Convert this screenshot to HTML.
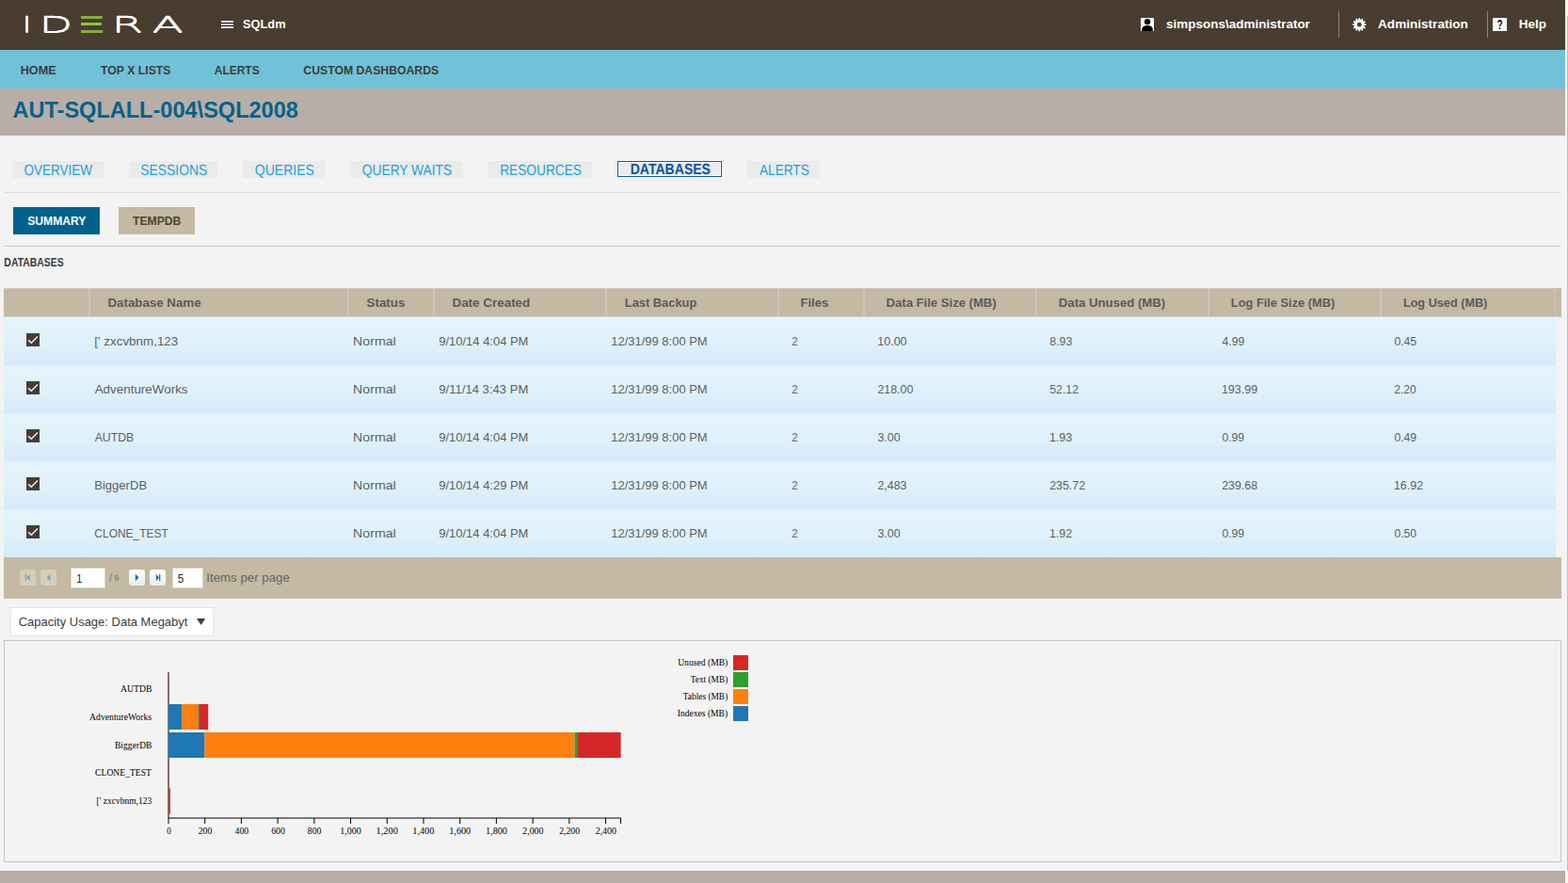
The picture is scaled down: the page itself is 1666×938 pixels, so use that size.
<!DOCTYPE html>
<html lang="en">
<head>
<meta charset="utf-8">
<title>SQLdm - AUT-SQLALL-004\SQL2008 - Databases</title>
<style>
*{box-sizing:border-box;margin:0;padding:0}
html,body{width:1666px;height:938px;overflow:hidden;background:#f3f3f3}
body{position:relative;font-family:"Liberation Sans",sans-serif;font-size:14px;color:#555}
a{text-decoration:none}
.t{position:absolute;display:block;white-space:pre;line-height:1;font-weight:400;transform-origin:0 0}
.lg{font-family:"DejaVu Sans Light","DejaVu Sans",sans-serif}
.s{font-family:"Liberation Serif",serif}
.bar,.sep,.ico,.tab,.hr,.btn,.thead,.row,.paging,.dd,.chart,.sb,svg,i,b{position:absolute;display:block}
.hd{left:0;top:0;width:1663px;height:53px;background:#483d30}
.nv{left:0;top:53px;width:1663px;height:41px;background:#6fc2d7}
.tb{left:0;top:94px;width:1663px;height:50px;background:#b8aea7}
.ft{left:0;top:925px;width:1663px;height:13px;background:#b8aea7}
.sep{top:12px;width:1px;height:28px;background:#8b8782}
.ico{left:1586px;top:19px;width:15px;height:14px;background:#fff}
.tab{top:171px;height:18px;background:#ebebeb}
.tab.sel{height:17px;border:1px solid #0b58a8;box-shadow:inset 0 0 0 1px #fff,0 0 0 1px #fafafa}
.hr{left:4px;height:1px;width:1655px}
.btn{top:220px;height:29px}
.thead{left:4px;top:306px;width:1655px;height:31px;background:#c4b9a2;border-top:1px solid #d1c3c0;border-bottom:1px solid #d2d6d0}
.thead i{top:0;width:2px;height:29px;background:#d1c3c1}
.thead b{left:1649px;top:-1px;width:6px;height:1px;background:#c4b9a2}
.row{left:4px;width:1649px;height:51px;background:linear-gradient(#e5f4fc,#e0f1fb 50%,#d3ebf8)}
.cb{left:24px;top:17px;width:14px;height:14px;background:#483d30}
.paging{left:4px;top:592px;width:1655px;height:44px;background:#c4b9a2}
.pb{top:13.2px;width:16.4px;height:16.5px;border-radius:3px}
.pb.dis{background:#d5cdbc}
.pb.en{background:linear-gradient(#fdfdfd,#ececec)}
.inp{top:11px;height:22px;background:#fff;border:1px solid #ddd7ca}
.dd{left:11px;top:645px;width:216px;height:31px;background:#fff;border:1px solid #e4e4e4}
.chart{left:4px;top:680px;width:1655px;height:236px;border:1px solid #c6c6c6;background:#f3f3f3}
.sb{left:1663px;top:0;width:3px;height:938px;background:#f4f4f4}
.sb i{left:2px;top:17px;width:1px;height:908px;background:#c1c1c1}
</style>
</head>
<body>
<header>
<div class="bar hd"></div>
<div class="logo" aria-label="IDERA"><span class="t lg" style="left:23px;top:15px;font-size:23.4px;font-weight:200;color:#fff;transform:translateX(0.62px) scaleX(1.4622);-webkit-text-stroke:.3px #fff;text-shadow:0 .5px 0 #fff,0 -.5px 0 #fff;">I</span><span class="t lg" style="left:41px;top:15px;font-size:23.4px;font-weight:200;color:#fff;transform:translateX(0.64px) scaleX(1.9561);-webkit-text-stroke:.3px #fff;text-shadow:0 .5px 0 #fff,0 -.5px 0 #fff;">D</span><span class="t lg" style="left:74px;top:16px;font-size:22px;font-weight:200;color:#8dc63f;transform:translateX(0.15px) scaleX(2.9340);clip-path:inset(-2px 0 -2px 4.04px);text-shadow:0 1px 0 #8dc63f,0 -1px 0 #8dc63f;">E</span><span class="t lg" style="left:118px;top:15px;font-size:23.4px;font-weight:200;color:#fff;transform:translateX(0.39px) scaleX(2.0703);-webkit-text-stroke:.3px #fff;text-shadow:0 .5px 0 #fff,0 -.5px 0 #fff;">R</span><span class="t lg" style="left:161px;top:15px;font-size:23.4px;font-weight:200;color:#fff;transform:translateX(0.83px) scaleX(2.0636);-webkit-text-stroke:.3px #fff;text-shadow:0 .5px 0 #fff,0 -.5px 0 #fff;">A</span></div>
<svg style="left:235px;top:22px" width="13" height="8" viewBox="0 0 13 8"><path d="M0 0h13v8H0z" fill="#000"/><path d="M0 0h13v2H0zM0 3h13v2H0zM0 6h13v2H0z" fill="#fff"/></svg><span class="t" style="left:257px;top:19px;font-size:13.4px;font-weight:700;color:#fff;transform:translateX(1.00px) scaleX(0.9563);">SQLdm</span>
<svg style="left:1212px;top:19px" width="14" height="14" viewBox="0 0 14 14"><rect width="14" height="14" fill="#fff"/><circle cx="7.1" cy="4.1" r="3.2" fill="#000"/><path d="M1.2 14v-1.6C1.2 9.8 3.6 8 7.1 8s5.7 1.8 5.7 4.4V14z" fill="#000"/></svg><span class="t" style="left:1239px;top:19px;font-size:13.4px;font-weight:700;color:#fff;transform:translateX(0.10px) scaleX(1.0063);">simpsons\administrator</span>
<b class="sep" style="left:1422px"></b><svg style="left:1437px;top:18.8px" width="15" height="15" viewBox="0 0 15 15"><path d="M14.46 6.41L14.46 7.99L12.73 8.06L12.43 9.17L13.89 10.09L13.10 11.46L11.57 10.66L10.76 11.47L11.56 13.00L10.19 13.79L9.27 12.33L8.16 12.63L8.09 14.36L6.51 14.36L6.44 12.63L5.33 12.33L4.41 13.79L3.04 13.00L3.84 11.47L3.03 10.66L1.50 11.46L0.71 10.09L2.17 9.17L1.87 8.06L0.14 7.99L0.14 6.41L1.87 6.34L2.17 5.23L0.71 4.31L1.50 2.94L3.03 3.74L3.84 2.93L3.04 1.40L4.41 0.61L5.33 2.07L6.44 1.77L6.51 0.04L8.09 0.04L8.16 1.77L9.27 2.07L10.19 0.61L11.56 1.40L10.76 2.93L11.57 3.74L13.10 2.94L13.89 4.31L12.43 5.23L12.73 6.34Z" fill="#fff"/><circle cx="7.3" cy="7.2" r="2.4" fill="#483d30"/></svg><span class="t" style="left:1464px;top:19px;font-size:13.4px;font-weight:700;color:#fff;transform:translateX(0.07px) scaleX(1.0134);">Administration</span>
<b class="sep" style="left:1580px"></b><i class="ico"></i><span class="t" style="left:1590px;top:19px;font-size:14px;font-weight:700;color:#000;transform:translateX(0.74px) scaleX(0.6737);">?</span><span class="t" style="left:1613px;top:19px;font-size:13.4px;font-weight:700;color:#fff;transform:translateX(0.82px) scaleX(1.0064);">Help</span>
</header>
<nav>
<div class="bar nv"></div>
<a class="t" style="left:21px;top:68px;font-size:13.4px;font-weight:700;color:#3d3d3d;transform:translateX(0.71px) scaleX(0.9445);">HOME</a>
<a class="t" style="left:107px;top:68px;font-size:13.4px;font-weight:700;color:#3d3d3d;transform:translateX(0.05px) scaleX(0.9148);">TOP X LISTS</a>
<a class="t" style="left:227px;top:68px;font-size:13.4px;font-weight:700;color:#3d3d3d;transform:translateX(0.74px) scaleX(0.8938);">ALERTS</a>
<a class="t" style="left:322px;top:68px;font-size:13.4px;font-weight:700;color:#3d3d3d;transform:translateX(0.31px) scaleX(0.9134);">CUSTOM DASHBOARDS</a>
</nav>
<main>
<div class="bar tb"></div>
<h1 class="t" style="left:13px;top:105px;font-size:24.4px;font-weight:700;color:#00628c;transform:translateX(0.48px) scaleX(0.9648);">AUT-SQLALL-004\SQL2008</h1>
<nav>
<div class="tab" style="left:13px;width:97px"></div><a class="t" style="left:25px;top:173px;font-size:16px;color:#1ea0db;transform:translateX(0.47px) matrix(0.8449,0,.0005,1,0,0);">OVERVIEW</a>
<div class="tab" style="left:137px;width:94px"></div><a class="t" style="left:149px;top:173px;font-size:16px;color:#1ea0db;transform:translateX(0.28px) matrix(0.8674,0,.0005,1,0,0);">SESSIONS</a>
<div class="tab" style="left:258px;width:87px"></div><a class="t" style="left:270px;top:173px;font-size:16px;color:#1ea0db;transform:translateX(0.82px) matrix(0.8757,0,.0005,1,0,0);">QUERIES</a>
<div class="tab" style="left:372px;width:120px"></div><a class="t" style="left:384px;top:173px;font-size:16px;color:#1ea0db;transform:translateX(0.82px) matrix(0.8604,0,.0005,1,0,0);">QUERY WAITS</a>
<div class="tab" style="left:519px;width:110px"></div><a class="t" style="left:531px;top:173px;font-size:16px;color:#1ea0db;transform:translateX(0.12px) matrix(0.8571,0,.0005,1,0,0);">RESOURCES</a>
<div class="tab sel" style="left:656px;width:111px"></div><a class="t" style="left:669px;top:172px;font-size:16px;font-weight:700;color:#0054a6;transform:translateX(0.71px) matrix(0.8773,0,.0005,1,0,0);">DATABASES</a>
<div class="tab" style="left:794px;width:77px"></div><a class="t" style="left:806px;top:173px;font-size:16px;color:#1ea0db;transform:translateX(0.97px) matrix(0.8525,0,.0005,1,0,0);">ALERTS</a>
</nav>
<div class="hr" style="top:204px;background:#dedede"></div>
<div class="btn" style="left:14px;width:92px;background:#00628d"></div><a class="t" style="left:29px;top:228px;font-size:13.4px;font-weight:700;color:#fff;transform:translateX(0.20px) scaleX(0.9062);">SUMMARY</a>
<div class="btn" style="left:126px;width:81px;background:#c4b9a2"></div><a class="t" style="left:140px;top:228px;font-size:13.4px;font-weight:700;color:#4d4538;transform:translateX(0.98px) scaleX(0.9073);">TEMPDB</a>
<div class="hr" style="top:261px;background:#cbcbcb;width:1654px"></div>
<h2 class="t" style="left:4px;top:272px;font-size:13px;font-weight:700;color:#3a3a3a;transform:translateX(0.37px) scaleX(0.8027);">DATABASES</h2>
<section role="table">
<div role="row">
<div class="thead"><i style="left:90px"></i><i style="left:365px"></i><i style="left:456px"></i><i style="left:639px"></i><i style="left:822px"></i><i style="left:913px"></i><i style="left:1096px"></i><i style="left:1279px"></i><i style="left:1462px"></i><i style="left:1648px;width:1px"></i><b></b></div>
<span role="columnheader" class="t" style="left:114px;top:315px;font-size:13.4px;font-weight:700;color:#5b5b5b;transform:translateX(0.43px) scaleX(0.9943);">Database Name</span>
<span role="columnheader" class="t" style="left:389px;top:315px;font-size:13.4px;font-weight:700;color:#5b5b5b;transform:translateX(0.57px) scaleX(0.9982);">Status</span>
<span role="columnheader" class="t" style="left:480px;top:315px;font-size:13.4px;font-weight:700;color:#5b5b5b;transform:translateX(0.43px) scaleX(1.0031);">Date Created</span>
<span role="columnheader" class="t" style="left:663px;top:315px;font-size:13.4px;font-weight:700;color:#5b5b5b;transform:translateX(0.83px) scaleX(0.9597);">Last Backup</span>
<span role="columnheader" class="t" style="left:850px;top:315px;font-size:13.4px;font-weight:700;color:#5b5b5b;transform:translateX(0.42px) scaleX(0.9783);">Files</span>
<span role="columnheader" class="t" style="left:941px;top:315px;font-size:13.4px;font-weight:700;color:#5b5b5b;transform:translateX(0.59px) scaleX(0.9772);">Data File Size (MB)</span>
<span role="columnheader" class="t" style="left:1124px;top:315px;font-size:13.4px;font-weight:700;color:#5b5b5b;transform:translateX(0.81px) scaleX(0.9832);">Data Unused (MB)</span>
<span role="columnheader" class="t" style="left:1307px;top:315px;font-size:13.4px;font-weight:700;color:#5b5b5b;transform:translateX(0.86px) scaleX(0.9567);">Log File Size (MB)</span>
<span role="columnheader" class="t" style="left:1490px;top:315px;font-size:13.4px;font-weight:700;color:#5b5b5b;transform:translateX(0.88px) scaleX(0.9470);">Log Used (MB)</span>
</div>
<div role="row">
<div class="row" style="top:337px"><i class="cb"><svg width="14" height="14" viewBox="0 0 14 14"><path d="M2.2 7.4l3.1 2.9L12 3.4" stroke="#e3f0f7" stroke-width="1.5" fill="none"/></svg></i></div>
<span role="cell" class="t" style="left:100px;top:356px;font-size:13.4px;color:#5f5f5f;transform:translateX(0.28px) scaleX(1.0011);">[' zxcvbnm,123</span><span role="cell" class="t" style="left:375px;top:356px;font-size:13.4px;color:#5f5f5f;transform:translateX(0.12px) scaleX(1.0570);">Normal</span><span role="cell" class="t" style="left:466px;top:356px;font-size:13.4px;color:#5f5f5f;transform:translateX(0.28px) scaleX(0.9682);">9/10/14 4:04 PM</span><span role="cell" class="t" style="left:649px;top:356px;font-size:13.4px;color:#5f5f5f;transform:translateX(0.30px) scaleX(0.9681);">12/31/99 8:00 PM</span><span role="cell" class="t" style="left:841px;top:356px;font-size:13.4px;color:#5f5f5f;transform:translateX(0.24px) scaleX(0.8560);">2</span><span role="cell" class="t" style="left:932px;top:356px;font-size:13.4px;color:#5f5f5f;transform:translateX(0.31px) scaleX(0.9325);">10.00</span><span role="cell" class="t" style="left:1115px;top:356px;font-size:13.4px;color:#5f5f5f;transform:translateX(0.32px) scaleX(0.9184);">8.93</span><span role="cell" class="t" style="left:1298px;top:356px;font-size:13.4px;color:#5f5f5f;transform:translateX(0.50px) scaleX(0.9094);">4.99</span><span role="cell" class="t" style="left:1481px;top:356px;font-size:13.4px;color:#5f5f5f;transform:translateX(0.40px) scaleX(0.9108);">0.45</span>
</div>
<div role="row">
<div class="row" style="top:388px"><i class="cb"><svg width="14" height="14" viewBox="0 0 14 14"><path d="M2.2 7.4l3.1 2.9L12 3.4" stroke="#e3f0f7" stroke-width="1.5" fill="none"/></svg></i></div>
<span role="cell" class="t" style="left:100px;top:407px;font-size:13.4px;color:#5f5f5f;transform:translateX(0.66px) scaleX(1.0015);">AdventureWorks</span><span role="cell" class="t" style="left:375px;top:407px;font-size:13.4px;color:#5f5f5f;transform:translateX(0.12px) scaleX(1.0570);">Normal</span><span role="cell" class="t" style="left:466px;top:407px;font-size:13.4px;color:#5f5f5f;transform:translateX(0.22px) scaleX(0.9788);">9/11/14 3:43 PM</span><span role="cell" class="t" style="left:649px;top:407px;font-size:13.4px;color:#5f5f5f;transform:translateX(0.30px) scaleX(0.9681);">12/31/99 8:00 PM</span><span role="cell" class="t" style="left:841px;top:407px;font-size:13.4px;color:#5f5f5f;transform:translateX(0.24px) scaleX(0.8560);">2</span><span role="cell" class="t" style="left:932px;top:407px;font-size:13.4px;color:#5f5f5f;transform:translateX(0.50px) scaleX(0.9220);">218.00</span><span role="cell" class="t" style="left:1115px;top:407px;font-size:13.4px;color:#5f5f5f;transform:translateX(0.24px) scaleX(0.9204);">52.12</span><span role="cell" class="t" style="left:1297px;top:407px;font-size:13.4px;color:#5f5f5f;transform:translateX(0.89px) scaleX(0.9331);">193.99</span><span role="cell" class="t" style="left:1481px;top:407px;font-size:13.4px;color:#5f5f5f;transform:translateX(0.17px) scaleX(0.9098);">2.20</span>
</div>
<div role="row">
<div class="row" style="top:439px"><i class="cb"><svg width="14" height="14" viewBox="0 0 14 14"><path d="M2.2 7.4l3.1 2.9L12 3.4" stroke="#e3f0f7" stroke-width="1.5" fill="none"/></svg></i></div>
<span role="cell" class="t" style="left:100px;top:458px;font-size:13.4px;color:#5f5f5f;transform:translateX(0.66px) scaleX(0.9166);">AUTDB</span><span role="cell" class="t" style="left:375px;top:458px;font-size:13.4px;color:#5f5f5f;transform:translateX(0.12px) scaleX(1.0570);">Normal</span><span role="cell" class="t" style="left:466px;top:458px;font-size:13.4px;color:#5f5f5f;transform:translateX(0.28px) scaleX(0.9682);">9/10/14 4:04 PM</span><span role="cell" class="t" style="left:649px;top:458px;font-size:13.4px;color:#5f5f5f;transform:translateX(0.30px) scaleX(0.9681);">12/31/99 8:00 PM</span><span role="cell" class="t" style="left:841px;top:458px;font-size:13.4px;color:#5f5f5f;transform:translateX(0.24px) scaleX(0.8560);">2</span><span role="cell" class="t" style="left:932px;top:458px;font-size:13.4px;color:#5f5f5f;transform:translateX(0.46px) scaleX(0.9224);">3.00</span><span role="cell" class="t" style="left:1114px;top:458px;font-size:13.4px;color:#5f5f5f;transform:translateX(0.89px) scaleX(0.9377);">1.93</span><span role="cell" class="t" style="left:1298px;top:458px;font-size:13.4px;color:#5f5f5f;transform:translateX(0.40px) scaleX(0.9117);">0.99</span><span role="cell" class="t" style="left:1481px;top:458px;font-size:13.4px;color:#5f5f5f;transform:translateX(0.40px) scaleX(0.9117);">0.49</span>
</div>
<div role="row">
<div class="row" style="top:490px"><i class="cb"><svg width="14" height="14" viewBox="0 0 14 14"><path d="M2.2 7.4l3.1 2.9L12 3.4" stroke="#e3f0f7" stroke-width="1.5" fill="none"/></svg></i></div>
<span role="cell" class="t" style="left:100px;top:509px;font-size:13.4px;color:#5f5f5f;transform:translateX(0.23px) scaleX(0.9747);">BiggerDB</span><span role="cell" class="t" style="left:375px;top:509px;font-size:13.4px;color:#5f5f5f;transform:translateX(0.12px) scaleX(1.0570);">Normal</span><span role="cell" class="t" style="left:466px;top:509px;font-size:13.4px;color:#5f5f5f;transform:translateX(0.28px) scaleX(0.9682);">9/10/14 4:29 PM</span><span role="cell" class="t" style="left:649px;top:509px;font-size:13.4px;color:#5f5f5f;transform:translateX(0.30px) scaleX(0.9681);">12/31/99 8:00 PM</span><span role="cell" class="t" style="left:841px;top:509px;font-size:13.4px;color:#5f5f5f;transform:translateX(0.24px) scaleX(0.8560);">2</span><span role="cell" class="t" style="left:932px;top:509px;font-size:13.4px;color:#5f5f5f;transform:translateX(0.50px) scaleX(0.9215);">2,483</span><span role="cell" class="t" style="left:1115px;top:509px;font-size:13.4px;color:#5f5f5f;transform:translateX(0.17px) scaleX(0.9263);">235.72</span><span role="cell" class="t" style="left:1298px;top:509px;font-size:13.4px;color:#5f5f5f;transform:translateX(0.17px) scaleX(0.9257);">239.68</span><span role="cell" class="t" style="left:1480px;top:509px;font-size:13.4px;color:#5f5f5f;transform:translateX(0.89px) scaleX(0.9328);">16.92</span>
</div>
<div role="row">
<div class="row" style="top:541px"><i class="cb"><svg width="14" height="14" viewBox="0 0 14 14"><path d="M2.2 7.4l3.1 2.9L12 3.4" stroke="#e3f0f7" stroke-width="1.5" fill="none"/></svg></i></div>
<span role="cell" class="t" style="left:100px;top:560px;font-size:13.4px;color:#5f5f5f;transform:translateX(0.36px) scaleX(0.8924);">CLONE_TEST</span><span role="cell" class="t" style="left:375px;top:560px;font-size:13.4px;color:#5f5f5f;transform:translateX(0.12px) scaleX(1.0570);">Normal</span><span role="cell" class="t" style="left:466px;top:560px;font-size:13.4px;color:#5f5f5f;transform:translateX(0.28px) scaleX(0.9682);">9/10/14 4:04 PM</span><span role="cell" class="t" style="left:649px;top:560px;font-size:13.4px;color:#5f5f5f;transform:translateX(0.30px) scaleX(0.9681);">12/31/99 8:00 PM</span><span role="cell" class="t" style="left:841px;top:560px;font-size:13.4px;color:#5f5f5f;transform:translateX(0.24px) scaleX(0.8560);">2</span><span role="cell" class="t" style="left:932px;top:560px;font-size:13.4px;color:#5f5f5f;transform:translateX(0.46px) scaleX(0.9224);">3.00</span><span role="cell" class="t" style="left:1114px;top:560px;font-size:13.4px;color:#5f5f5f;transform:translateX(0.89px) scaleX(0.9359);">1.92</span><span role="cell" class="t" style="left:1298px;top:560px;font-size:13.4px;color:#5f5f5f;transform:translateX(0.40px) scaleX(0.9117);">0.99</span><span role="cell" class="t" style="left:1481px;top:560px;font-size:13.4px;color:#5f5f5f;transform:translateX(0.40px) scaleX(0.9043);">0.50</span>
</div>
</section>
<div class="paging"><i class="pb dis" style="left:17.3px"><svg width="17" height="17" viewBox="0 0 17 17"><path d="M5.8 4.8h1.3v7.4H5.8zM7.1 8.5l3.7-3.7v7.4z" fill="#78a6af"/></svg></i><i class="pb dis" style="left:39.3px"><svg width="17" height="17" viewBox="0 0 17 17"><path d="M6.6 8.5l3.8-3.7v7.4z" fill="#78a6af"/></svg></i><i class="inp" style="left:71px;width:37px"></i><i class="pb en" style="left:133.3px"><svg width="17" height="17" viewBox="0 0 17 17"><path d="M10.6 8.5L6.8 4.8v7.4z" fill="#0b76a4"/></svg></i><i class="pb en" style="left:155.3px"><svg width="17" height="17" viewBox="0 0 17 17"><path d="M10.1 4.8h1.2v7.4h-1.2zM10.1 8.5L6.8 4.8v7.4z" fill="#0b76a4"/></svg></i><i class="inp" style="left:179px;width:33px"></i></div>
<span class="t" style="left:81px;top:608px;font-size:13.4px;color:#2a2a2a;transform:translateX(0.17px) scaleX(0.8067);">1</span><span class="t" style="left:116px;top:607px;font-size:13.4px;color:#777;transform:translateX(0.04px) scaleX(0.8254);">/</span><span class="t" style="left:121px;top:610px;font-size:8.6px;color:#6d6d6d;transform:translateX(0.44px) scaleX(0.9896);">9</span><span class="t" style="left:188px;top:608px;font-size:13.4px;color:#2a2a2a;transform:translateX(0.85px) scaleX(0.8770);">5</span><span class="t" style="left:219px;top:607px;font-size:13.4px;color:#666;transform:translateX(0.26px) scaleX(0.9914);">Items per page</span>
<div class="dd"><svg style="left:197.2px;top:11.2px" width="10" height="8" viewBox="0 0 10 8"><path d="M0 0h9.2L4.6 7z" fill="#483d30"/></svg></div><span class="t" style="left:19px;top:654px;font-size:13.4px;color:#3c3c3c;transform:translateX(0.63px) scaleX(0.9700);">Capacity Usage: Data Megabyt</span>
<figure>
<div class="chart"></div>
<svg style="left:0;top:680px" width="1660" height="240" viewBox="0 680 1660 240"><g fill="none" stroke="#000" stroke-width="1"><path d="M179 714V869"/><path d="M179 875V869H659.6V875"/><path d="M217.71 869v6"/><path d="M256.42 869v6"/><path d="M295.13 869v6"/><path d="M333.84 869v6"/><path d="M372.56 869v6"/><path d="M411.27 869v6"/><path d="M449.98 869v6"/><path d="M488.69 869v6"/><path d="M527.40 869v6"/><path d="M566.11 869v6"/><path d="M604.82 869v6"/><path d="M643.53 869v6"/></g><rect x="179.00" y="718" width="0.06" height="27" fill="#1f77b4"/><rect x="179.06" y="718" width="0.12" height="27" fill="#ff7f0e"/><rect x="179.17" y="718" width="0.02" height="27" fill="#2ca02c"/><rect x="179.19" y="718" width="0.37" height="27" fill="#d62728"/><rect x="179.00" y="748" width="14.52" height="27" fill="#1f77b4"/><rect x="193.52" y="748" width="16.84" height="27" fill="#ff7f0e"/><rect x="210.36" y="748" width="0.77" height="27" fill="#2ca02c"/><rect x="211.13" y="748" width="10.09" height="27" fill="#d62728"/><rect x="179.00" y="778" width="38.52" height="27" fill="#1f77b4"/><rect x="217.52" y="778" width="393.11" height="27" fill="#ff7f0e"/><rect x="610.63" y="778" width="3.35" height="27" fill="#2ca02c"/><rect x="613.98" y="778" width="45.63" height="27" fill="#d62728"/><rect x="179.00" y="807.6" width="0.06" height="27.4" fill="#1f77b4"/><rect x="179.06" y="807.6" width="0.14" height="27.4" fill="#ff7f0e"/><rect x="179.19" y="807.6" width="0.02" height="27.4" fill="#2ca02c"/><rect x="179.21" y="807.6" width="0.37" height="27.4" fill="#d62728"/><rect x="179.00" y="837.3" width="0.08" height="27.4" fill="#1f77b4"/><rect x="179.08" y="837.3" width="0.12" height="27.4" fill="#ff7f0e"/><rect x="179.19" y="837.3" width="0.01" height="27.4" fill="#2ca02c"/><rect x="179.21" y="837.3" width="1.73" height="27.4" fill="#d62728"/><rect x="779" y="696" width="16" height="16" fill="#d62728"/><rect x="779" y="714" width="16" height="16" fill="#2ca02c"/><rect x="779" y="732" width="16" height="16" fill="#ff7f0e"/><rect x="779" y="750" width="16" height="16" fill="#1f77b4"/></svg>
<span class="t s" style="left:127px;top:727px;font-size:10px;color:#000;transform:translateX(0.97px) scaleX(0.9757);">AUTDB</span><span class="t s" style="left:95px;top:757px;font-size:10px;color:#000;transform:translateX(0.04px) scaleX(0.9696);">AdventureWorks</span><span class="t s" style="left:121px;top:787px;font-size:10px;color:#000;transform:translateX(0.93px) scaleX(0.9635);">BiggerDB</span><span class="t s" style="left:101px;top:816px;font-size:10px;color:#000;transform:translateX(0.11px) scaleX(0.9611);">CLONE_TEST</span><span class="t s" style="left:102px;top:846px;font-size:10px;color:#000;transform:translateX(0.57px) scaleX(0.9480);">[' zxcvbnm,123</span>
<span class="t s" style="left:177px;top:878px;font-size:10px;color:#000;transform:translateX(0.24px) scaleX(0.8994);">0</span><span class="t s" style="left:210px;top:878px;font-size:10px;color:#000;transform:translateX(0.63px) scaleX(0.9816);">200</span><span class="t s" style="left:249px;top:878px;font-size:10px;color:#000;transform:translateX(0.62px) scaleX(0.9728);">400</span><span class="t s" style="left:288px;top:878px;font-size:10px;color:#000;transform:translateX(0.15px) scaleX(0.9831);">600</span><span class="t s" style="left:326px;top:878px;font-size:10px;color:#000;transform:translateX(0.84px) scaleX(0.9759);">800</span><span class="t s" style="left:361px;top:878px;font-size:10px;color:#000;transform:translateX(0.17px) scaleX(1.0060);">1,000</span><span class="t s" style="left:399px;top:878px;font-size:10px;color:#000;transform:translateX(0.57px) scaleX(1.0326);">1,200</span><span class="t s" style="left:438px;top:878px;font-size:10px;color:#000;transform:translateX(0.28px) scaleX(1.0258);">1,400</span><span class="t s" style="left:477px;top:878px;font-size:10px;color:#000;transform:translateX(0.26px) scaleX(1.0172);">1,600</span><span class="t s" style="left:515px;top:878px;font-size:10px;color:#000;transform:translateX(0.97px) scaleX(1.0207);">1,800</span><span class="t s" style="left:555px;top:878px;font-size:10px;color:#000;transform:translateX(0.32px) scaleX(0.9835);">2,000</span><span class="t s" style="left:594px;top:878px;font-size:10px;color:#000;transform:translateX(0.13px) scaleX(0.9789);">2,200</span><span class="t s" style="left:632px;top:878px;font-size:10px;color:#000;transform:translateX(0.67px) scaleX(0.9936);">2,400</span>
<span class="t s" style="left:720px;top:699px;font-size:10px;color:#000;transform:translateX(0.14px) scaleX(0.9622);">Unused (MB)</span><span class="t s" style="left:733px;top:717px;font-size:10px;color:#000;transform:translateX(0.70px) scaleX(0.9340);">Text (MB)</span><span class="t s" style="left:725px;top:735px;font-size:10px;color:#000;transform:translateX(0.70px) scaleX(0.9383);">Tables (MB)</span><span class="t s" style="left:719px;top:753px;font-size:10px;color:#000;transform:translateX(0.76px) scaleX(0.9573);">Indexes (MB)</span>
</figure>
</main>
<footer><div class="bar ft"></div></footer>
<div class="sb"><i></i></div>
</body>
</html>
